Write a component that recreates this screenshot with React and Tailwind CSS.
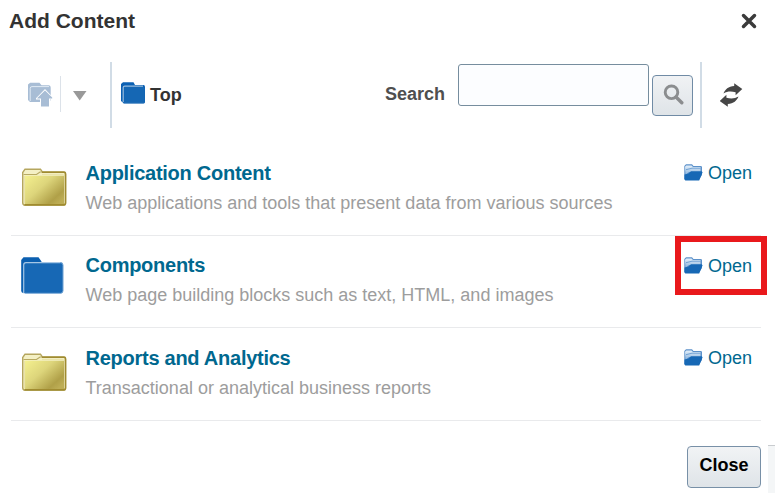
import React from "react";

function YellowFolder() {
  return (
    <svg width="48" height="42" viewBox="0 0 48 42" className="block">
      <defs>
        <linearGradient id="gold" x1="0" y1="0" x2="1" y2="0.8">
          <stop offset="0" stopColor="#f4f08f" />
          <stop offset="0.45" stopColor="#ddd57b" />
          <stop offset="0.85" stopColor="#b0a048" />
          <stop offset="1" stopColor="#bdad55" />
        </linearGradient>
      </defs>
      <path d="M1.7 36.5V6.5L4 3.2H19.5L21.3 6H43Q44.6 6 44.6 8V37Q44.6 39.2 42.5 39.2H4Q1.7 39.2 1.7 36.5Z" fill="#f4f0c5" stroke="#b5a65e" strokeWidth="1.4" />
      <path d="M2.5 8.5H15.5L19 6H21" fill="none" stroke="#b8aa62" strokeWidth="1.2" />
      <path d="M3.8 9.8H43V38H3.8Z" fill="url(#gold)" />
      <path d="M21 6.3H43Q44.5 6.3 44.5 8V37Q44.5 38.8 42.5 38.8H3.5" fill="none" stroke="#a08b30" strokeWidth="1.5" />
      <path d="M3.6 37V10M21 8.4H42.5" fill="none" stroke="#e9e2a8" strokeWidth="1" />
    </svg>
  );
}

function BlueFolder() {
  return (
    <svg width="44" height="38" viewBox="0 0 44 38" className="block">
      <path d="M0.2 34V3L2.5 0.3H17.5L20.5 4.5V8H3V36.3Q0.2 36 0.2 34Z" fill="#0b5fb0" />
      <path d="M4.5 5.3H39.5Q42.2 5.3 42.2 8V33.8Q42.2 36.5 39.5 36.5H4.5Q2.2 36.5 2.2 34V8Q2.2 5.3 4.5 5.3Z" fill="#1768b5" />
      <path d="M2.7 36V8Q2.7 5.6 5 5.6H39.5" fill="none" stroke="#a5c6e5" strokeWidth="1.2" />
      <path d="M39.5 5.6Q42 5.6 42 8.5V33.5Q42 36.3 39.5 36.3H4" fill="none" stroke="#8db5dc" strokeWidth="0.8" />
    </svg>
  );
}

function SmallFolder() {
  return (
    <svg width="24" height="22" viewBox="0 0 24 22" className="block">
      <path d="M0 19V2L2 0.3H12.5L14 3H22.5Q24 3 24 5V20Q24 21.5 22 21.5H3Z" fill="#0b60b3" />
      <path d="M2.2 20V5.5Q2.2 4.1 3.8 4.1H22" fill="none" stroke="#9cbddd" strokeWidth="1.2" />
      <path d="M3.2 5H22Q23.8 5 23.8 6.5V19.5Q23.8 21.2 22 21.2H3.2Z" fill="#1567b4" />
      <path d="M2.5 21.4H23" stroke="#6e9fce" strokeWidth="0.8" />
    </svg>
  );
}

function FolderUp() {
  return (
    <svg width="25" height="25" viewBox="0 0 25 25" className="block">
      <path d="M0 18V2.5L2.2 0.8H11.5L13.5 3.2H21Q22.7 3.4 22.7 5.5V18L21 20H2Z" fill="#a8bdd5" />
      <path d="M2.2 19V6.3Q2.2 4.6 4 4.6H21" fill="none" stroke="#e1eaf4" strokeWidth="1" />
      <path d="M17 6.9L25 15.4V17.4H22V25H12V17.4H8V16.2Z" fill="#fff" />
      <path d="M17 8.6L24.2 15.6V16.4H21V24.5H13V16.4H9.3V15.9Z" fill="#a8bdd5" />
    </svg>
  );
}

function OpenFolder() {
  return (
    <svg width="19" height="17" viewBox="0 0 19 17" className="block">
      <defs>
        <linearGradient id="sky" x1="0" y1="0" x2="0" y2="1">
          <stop offset="0" stopColor="#e5f0fa" />
          <stop offset="1" stopColor="#85b0db" />
        </linearGradient>
      </defs>
      <path d="M0.3 15.5V2L2 0.3H8L9.5 2H16.5Q18 2 18 3V11L15 15.5Z" fill="#5c91ca" />
      <path d="M1 2.8L2.3 1.6H7.5L9 3H16.5V8H5L1.5 11Z" fill="url(#sky)" />
      <path d="M2 5.7L8 4.2H16.5" fill="none" stroke="#5c93cb" strokeWidth="0.8" />
      <path d="M0.5 10.5L4.5 9.6L7 7.2H17.6L18.6 8.2L15.2 16.6H1.3L0.4 15Z" fill="#1768b5" />
    </svg>
  );
}

function OpenLink() {
  return (
    <a className="flex items-start text-[#00688f]">
      <OpenFolder />
      <span className="ml-[5px] text-[18px] leading-[18px]">Open</span>
    </a>
  );
}

function Row({ title, text, blue, marked }) {
  return (
    <div className={`relative flex border-b border-[#e9eaec] ${blue ? "h-[92px]" : "h-[93px]"}`}>
      <div className={blue ? "w-[74.5px] pt-[21px] pl-[10px]" : "w-[74.5px] pt-[23px] pl-[10px]"}>
        {blue ? <BlueFolder /> : <YellowFolder />}
      </div>
      <div className={`flex-1 whitespace-nowrap ${blue ? "pt-[17px]" : "pt-[18px]"}`}>
        <div className="h-[24px] text-[20px] leading-[24px] font-bold tracking-[-0.26px] text-[#00688f]">{title}</div>
        <div className="mt-[7px] h-[22px] text-[18px] leading-[22px] text-[#9d9d9d]">{text}</div>
      </div>
      <div className="w-[77px] pt-[21px]">
        <OpenLink />
      </div>
      {marked && <div className="absolute top-0 -right-[6px] h-[59px] w-[92px] border-[6px] border-[#e9191c]" />}
    </div>
  );
}

export default function App() {
  return (
    <div className="flex h-[493px] w-[775px] flex-col overflow-hidden bg-white font-['Liberation_Sans',Arial,sans-serif]">
      <header className="flex h-[62px] justify-between pr-[18px] pl-[9px]">
        <h1 className="mt-[9px] text-[21px] leading-[24px] font-bold text-[#333]">Add Content</h1>
        <svg width="17" height="16" viewBox="0 0 17 16" className="mt-[13px]">
          <path d="M3.5 2.5L14.5 13.5M14.5 2.5L3.5 13.5" stroke="#3b3b3b" strokeWidth="3.5" strokeLinecap="round" />
        </svg>
      </header>

      <div className="flex h-[66px]">
        <div className="flex w-[112px] border-r-2 border-[#d1dce6] pl-[28px]">
          <div className="mt-[20px] w-[32px]"><FolderUp /></div>
          <div className="mt-[14px] h-[36px] w-px bg-[#dce2e9]" />
          <svg width="15" height="10" viewBox="0 0 15 10" className="mt-[29px] ml-[12px]">
            <path d="M0 0H13.5L6.7 9.5Z" fill="#999" />
          </svg>
        </div>
        <div className="flex w-[273px] pl-[9px]">
          <div className="mt-[20px]"><SmallFolder /></div>
          <span className="mt-[22px] ml-[5px] text-[18px] leading-[22px] font-bold text-[#333]">Top</span>
        </div>
        <label className="mt-[21px] w-[73px] text-[18px] leading-[22px] font-bold text-[#4f4f4f]">Search</label>
        <input className="mt-[2px] h-[42px] w-[191px] rounded-[3px] border border-[#768d9e] bg-[#fcfdff] outline-none" />
        <button className="mt-[13px] ml-[3px] flex h-[41px] w-[41px] items-start rounded-[4px] border border-[#708ba5] bg-linear-to-b from-[#f0f2f4] to-[#dfe4e8] pt-[8px] pl-[10px]">
          <svg width="21" height="22" viewBox="0 0 21 22">
            <circle cx="8.5" cy="8.3" r="6.3" fill="none" stroke="#8b8d8f" strokeWidth="2.9" />
            <path d="M13 13L18.8 18.8" stroke="#8b8d8f" strokeWidth="3.4" strokeLinecap="round" />
          </svg>
        </button>
        <div className="ml-[7px] w-[2px] bg-[#d1dce6]" />
        <svg width="23" height="25" viewBox="0 0 23 25" className="mt-[21px] ml-[18px]">
          <path d="M3.5 10.5C5 6.5 8.5 3.2 14.2 3V0.3L22.3 6L15.6 12.2V9.2C11 8.2 7 8.3 3.5 10.5Z" fill="#464646" />
          <path d="M18.5 13.5C17 17.5 13.5 20.8 7.8 21V23.7L-0.3 18L6.4 11.8V14.8C11 15.8 15 15.7 18.5 13.5Z" fill="#464646" />
        </svg>
      </div>

      <main className="ml-[11px] w-[750px] pt-[15px]">
        <Row title="Application Content" text="Web applications and tools that present data from various sources" />
        <Row title="Components" text="Web page building blocks such as text, HTML, and images" blue marked />
        <Row title="Reports and Analytics" text="Transactional or analytical business reports" />
      </main>

      <footer className="flex flex-1 justify-end">
        <button className="mt-[25px] h-[42px] w-[74px] rounded-[4px] border border-[#7890a7] bg-linear-to-b from-[#f1f3f5] to-[#dfe4e8] pb-[4px] text-[18px] font-bold text-black">Close</button>
        <div className="mt-[24px] ml-[7px] w-[7px] border-t border-[#c9cccf] bg-[#f4f6f7]" />
      </footer>
    </div>
  );
}
